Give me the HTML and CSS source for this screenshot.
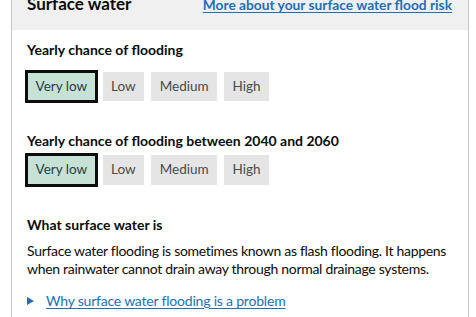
FILE: index.html
```html
<!DOCTYPE html>
<html lang="en">
<head>
  <meta charset="UTF-8" />
  <meta name="viewport" content="width=device-width, initial-scale=1.0" />
  <title>Surface water</title>
  <link rel="stylesheet" href="styles.css">
</head>
<body>
  <div class="risk-card">
    <div class="risk-card-header">
      <h2 class="risk-title">Surface water</h2>
      <a class="risk-link" href="#">More about your surface water flood risk</a>
    </div>

    <div class="risk-card-body">
      <h3 class="risk-heading">Yearly chance of flooding</h3>
      <ul class="risk-scale">
        <li class="risk-option selected">Very low</li>
        <li class="risk-option">Low</li>
        <li class="risk-option">Medium</li>
        <li class="risk-option">High</li>
      </ul>

      <h3 class="risk-heading future">Yearly chance of flooding between 2040 and 2060</h3>
      <ul class="risk-scale">
        <li class="risk-option selected">Very low</li>
        <li class="risk-option">Low</li>
        <li class="risk-option">Medium</li>
        <li class="risk-option">High</li>
      </ul>

      <h3 class="risk-heading about">What surface water is</h3>
      <p class="risk-text">Surface water flooding is sometimes known as flash flooding. It happens when rainwater cannot drain away through normal drainage systems.</p>

      <details class="risk-details">
        <summary><a href="#">Why surface water flooding is a problem</a></summary>
      </details>
    </div>
  </div>
</body>
</html>
```

FILE: styles.css
```css
* {
  margin: 0;
  padding: 0;
  box-sizing: border-box;
}

body {
  font-family: Lato, 'Liberation Sans', Arial, sans-serif;
  color: #0b0c0c;
  background: #ffffff;
  overflow: hidden;
}

a {
  color: #1d70b8;
  text-decoration: underline;
  text-underline-offset: 2px;
}

.risk-card {
  width: 458px;
  margin: -18px 0 0 11px;
  border-left: 1px solid #c8c8c8;
  border-right: 1px solid #c8c8c8;
}

.risk-card-header {
  display: flex;
  justify-content: space-between;
  align-items: baseline;
  background: #f0f0f0;
  padding: 11px 16px 14px 15px;
}

.risk-title {
  font-size: 17px;
  line-height: 22.5px;
  font-weight: 700;
}

.risk-link {
  font-size: 13.75px;
  font-weight: 700;
}

.risk-card-body {
  padding: 10px 15px 20px 15px;
}

.risk-heading {
  font-size: 14px;
  line-height: 19px;
  font-weight: 700;
  margin-bottom: 13px;
}

.risk-heading.future {
  margin-bottom: 5px;
}

.risk-heading.about {
  margin-bottom: 8px;
}

.risk-scale {
  list-style: none;
  display: flex;
  gap: 7px;
  margin-bottom: 30px;
}

.risk-option {
  background: #e5e5e5;
  font-size: 13.5px;
  line-height: 19.5px;
  padding: 5px 8.5px;
  color: #464b4e;
}

.risk-option.selected {
  background: #c6e2d6;
  box-shadow: 0 0 0 1px #0b0c0c inset, 0 0 0 2px #0b0c0c;
  color: #2b3a42;
}

.risk-text {
  font-size: 14px;
  line-height: 18.75px;
  letter-spacing: -0.3px;
  margin-bottom: 13px;
}

.risk-details summary {
  font-size: 14px;
  line-height: 18.75px;
  letter-spacing: -0.2px;
  list-style: none;
  display: flex;
  align-items: center;
}

.risk-details summary::-webkit-details-marker {
  display: none;
}

.risk-details summary::before {
  content: "";
  width: 0;
  height: 0;
  border-left: 7px solid #1d70b8;
  border-top: 4px solid transparent;
  border-bottom: 4px solid transparent;
  margin-right: 12px;
}
```
